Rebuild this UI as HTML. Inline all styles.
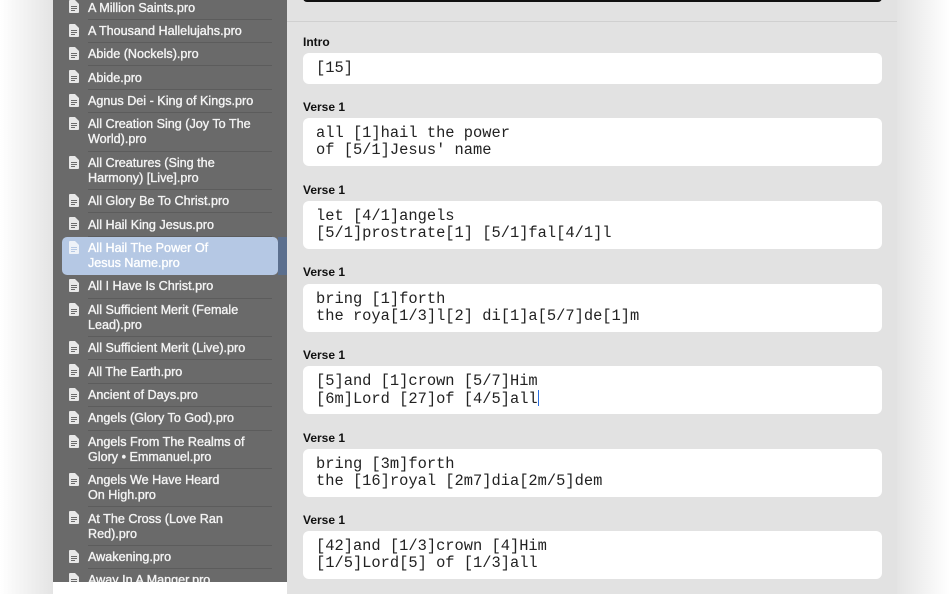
<!DOCTYPE html>
<html><head><meta charset="utf-8"><style>
*{margin:0;padding:0;box-sizing:border-box}
body{width:950px;height:594px;overflow:hidden;background:#fff;position:relative;font-family:"Liberation Sans",sans-serif}
.shadowL{position:absolute;left:0;top:0;width:53px;height:594px;background:linear-gradient(to right,#fff,#e4e4e4)}
.shadowR{position:absolute;left:897px;top:0;width:53px;height:594px;background:linear-gradient(to left,#fff,#e4e4e4)}
.side{position:absolute;left:53px;top:0;width:234px;height:582px;background:#6a6a6a;overflow:hidden}
.sideb{position:absolute;left:53px;top:582px;width:234px;height:12px;background:#fff}
.list{position:absolute;left:0;top:-3.7px;width:234px}
.row{position:relative;height:23.4px;padding:4.2px 0 0 35px;color:#f4f4f4;font-size:12.6px;line-height:15px;-webkit-text-stroke:0.35px #f4f4f4}
.row.d{height:38.4px}
.row::after{content:"";position:absolute;left:35px;right:15px;bottom:0;height:1px;background:#5c5c5c}
.row svg{position:absolute;left:16px;top:4px}
.row.sel{color:#fff;-webkit-text-stroke:0.35px #fff}
.row.sel::before{content:"";position:absolute;left:9px;top:0;width:216px;height:38px;background:#b5c8e4;border-radius:5px}
.row.sel .bar{position:absolute;left:225px;top:0;width:9px;height:38px;background:#5b6f8e}
.row.sel::after{display:none}
.row span{position:relative}
.main{position:absolute;left:287px;top:0;width:610px;height:594px;background:#e2e2e2}
.top{position:absolute;left:16px;top:-8px;width:579px;height:10px;background:#111;border-radius:4px}
.hr{position:absolute;left:0;top:21px;width:610px;height:1px;background:#d0d0d0}
.lbl{position:absolute;left:16px;font-size:12px;font-weight:bold;color:#111}
.box{position:absolute;left:16px;width:579px;background:#fff;border-radius:6px;font-family:"Liberation Mono",monospace;font-size:15.4px;line-height:17px;color:#222;padding:7px 0 0 13px;white-space:pre}
.cur{display:inline-block;width:1.5px;height:16px;background:#2a6fe0;vertical-align:-3px}
</style></head><body>
<div class="shadowL"></div><div class="shadowR"></div>
<div class="side"><div class="list">
<div class="row"><svg width="10" height="13" viewBox="0 0 10 13"><path d="M0 1Q0 0 1 0H6L10 4V12Q10 13 9 13H1Q0 13 0 12Z" fill="#e8e8e8"/><path d="M2 6.5H8M2 8.5H8M2 10.5H6" stroke="#6a6a6a" stroke-width="1"/></svg><span>A Million Saints.pro</span></div>
<div class="row"><svg width="10" height="13" viewBox="0 0 10 13"><path d="M0 1Q0 0 1 0H6L10 4V12Q10 13 9 13H1Q0 13 0 12Z" fill="#e8e8e8"/><path d="M2 6.5H8M2 8.5H8M2 10.5H6" stroke="#6a6a6a"/></svg><span>A Thousand Hallelujahs.pro</span></div>
<div class="row"><svg width="10" height="13" viewBox="0 0 10 13"><path d="M0 1Q0 0 1 0H6L10 4V12Q10 13 9 13H1Q0 13 0 12Z" fill="#e8e8e8"/><path d="M2 6.5H8M2 8.5H8M2 10.5H6" stroke="#6a6a6a"/></svg><span>Abide (Nockels).pro</span></div>
<div class="row"><svg width="10" height="13" viewBox="0 0 10 13"><path d="M0 1Q0 0 1 0H6L10 4V12Q10 13 9 13H1Q0 13 0 12Z" fill="#e8e8e8"/><path d="M2 6.5H8M2 8.5H8M2 10.5H6" stroke="#6a6a6a"/></svg><span>Abide.pro</span></div>
<div class="row"><svg width="10" height="13" viewBox="0 0 10 13"><path d="M0 1Q0 0 1 0H6L10 4V12Q10 13 9 13H1Q0 13 0 12Z" fill="#e8e8e8"/><path d="M2 6.5H8M2 8.5H8M2 10.5H6" stroke="#6a6a6a"/></svg><span>Agnus Dei - King of Kings.pro</span></div>
<div class="row d"><svg width="10" height="13" viewBox="0 0 10 13"><path d="M0 1Q0 0 1 0H6L10 4V12Q10 13 9 13H1Q0 13 0 12Z" fill="#e8e8e8"/><path d="M2 6.5H8M2 8.5H8M2 10.5H6" stroke="#6a6a6a"/></svg><span>All Creation Sing (Joy To The<br>World).pro</span></div>
<div class="row d"><svg width="10" height="13" viewBox="0 0 10 13"><path d="M0 1Q0 0 1 0H6L10 4V12Q10 13 9 13H1Q0 13 0 12Z" fill="#e8e8e8"/><path d="M2 6.5H8M2 8.5H8M2 10.5H6" stroke="#6a6a6a"/></svg><span>All Creatures (Sing the<br>Harmony) [Live].pro</span></div>
<div class="row"><svg width="10" height="13" viewBox="0 0 10 13"><path d="M0 1Q0 0 1 0H6L10 4V12Q10 13 9 13H1Q0 13 0 12Z" fill="#e8e8e8"/><path d="M2 6.5H8M2 8.5H8M2 10.5H6" stroke="#6a6a6a"/></svg><span>All Glory Be To Christ.pro</span></div>
<div class="row"><svg width="10" height="13" viewBox="0 0 10 13"><path d="M0 1Q0 0 1 0H6L10 4V12Q10 13 9 13H1Q0 13 0 12Z" fill="#e8e8e8"/><path d="M2 6.5H8M2 8.5H8M2 10.5H6" stroke="#6a6a6a"/></svg><span>All Hail King Jesus.pro</span></div>
<div class="row d sel"><div class="bar"></div><svg width="10" height="13" viewBox="0 0 10 13" style="position:absolute"><path d="M0 1Q0 0 1 0H6L10 4V12Q10 13 9 13H1Q0 13 0 12Z" fill="#eef2f8"/><path d="M2 6.5H8M2 8.5H8M2 10.5H6" stroke="#b5c8e4"/></svg><span>All Hail The Power Of<br>Jesus Name.pro</span></div>
<div class="row"><svg width="10" height="13" viewBox="0 0 10 13"><path d="M0 1Q0 0 1 0H6L10 4V12Q10 13 9 13H1Q0 13 0 12Z" fill="#e8e8e8"/><path d="M2 6.5H8M2 8.5H8M2 10.5H6" stroke="#6a6a6a"/></svg><span>All I Have Is Christ.pro</span></div>
<div class="row d"><svg width="10" height="13" viewBox="0 0 10 13"><path d="M0 1Q0 0 1 0H6L10 4V12Q10 13 9 13H1Q0 13 0 12Z" fill="#e8e8e8"/><path d="M2 6.5H8M2 8.5H8M2 10.5H6" stroke="#6a6a6a"/></svg><span>All Sufficient Merit (Female<br>Lead).pro</span></div>
<div class="row"><svg width="10" height="13" viewBox="0 0 10 13"><path d="M0 1Q0 0 1 0H6L10 4V12Q10 13 9 13H1Q0 13 0 12Z" fill="#e8e8e8"/><path d="M2 6.5H8M2 8.5H8M2 10.5H6" stroke="#6a6a6a"/></svg><span>All Sufficient Merit (Live).pro</span></div>
<div class="row"><svg width="10" height="13" viewBox="0 0 10 13"><path d="M0 1Q0 0 1 0H6L10 4V12Q10 13 9 13H1Q0 13 0 12Z" fill="#e8e8e8"/><path d="M2 6.5H8M2 8.5H8M2 10.5H6" stroke="#6a6a6a"/></svg><span>All The Earth.pro</span></div>
<div class="row"><svg width="10" height="13" viewBox="0 0 10 13"><path d="M0 1Q0 0 1 0H6L10 4V12Q10 13 9 13H1Q0 13 0 12Z" fill="#e8e8e8"/><path d="M2 6.5H8M2 8.5H8M2 10.5H6" stroke="#6a6a6a"/></svg><span>Ancient of Days.pro</span></div>
<div class="row"><svg width="10" height="13" viewBox="0 0 10 13"><path d="M0 1Q0 0 1 0H6L10 4V12Q10 13 9 13H1Q0 13 0 12Z" fill="#e8e8e8"/><path d="M2 6.5H8M2 8.5H8M2 10.5H6" stroke="#6a6a6a"/></svg><span>Angels (Glory To God).pro</span></div>
<div class="row d"><svg width="10" height="13" viewBox="0 0 10 13"><path d="M0 1Q0 0 1 0H6L10 4V12Q10 13 9 13H1Q0 13 0 12Z" fill="#e8e8e8"/><path d="M2 6.5H8M2 8.5H8M2 10.5H6" stroke="#6a6a6a"/></svg><span>Angels From The Realms of<br>Glory • Emmanuel.pro</span></div>
<div class="row d"><svg width="10" height="13" viewBox="0 0 10 13"><path d="M0 1Q0 0 1 0H6L10 4V12Q10 13 9 13H1Q0 13 0 12Z" fill="#e8e8e8"/><path d="M2 6.5H8M2 8.5H8M2 10.5H6" stroke="#6a6a6a"/></svg><span>Angels We Have Heard<br>On High.pro</span></div>
<div class="row d"><svg width="10" height="13" viewBox="0 0 10 13"><path d="M0 1Q0 0 1 0H6L10 4V12Q10 13 9 13H1Q0 13 0 12Z" fill="#e8e8e8"/><path d="M2 6.5H8M2 8.5H8M2 10.5H6" stroke="#6a6a6a"/></svg><span>At The Cross (Love Ran<br>Red).pro</span></div>
<div class="row"><svg width="10" height="13" viewBox="0 0 10 13"><path d="M0 1Q0 0 1 0H6L10 4V12Q10 13 9 13H1Q0 13 0 12Z" fill="#e8e8e8"/><path d="M2 6.5H8M2 8.5H8M2 10.5H6" stroke="#6a6a6a"/></svg><span>Awakening.pro</span></div>
<div class="row"><svg width="10" height="13" viewBox="0 0 10 13"><path d="M0 1Q0 0 1 0H6L10 4V12Q10 13 9 13H1Q0 13 0 12Z" fill="#e8e8e8"/><path d="M2 6.5H8M2 8.5H8M2 10.5H6" stroke="#6a6a6a"/></svg><span>Away In A Manger.pro</span></div>
</div></div>
<div class="sideb"></div>
<div class="main">
<div class="top"></div><div class="hr"></div>
<div class="lbl" style="top:35px">Intro</div>
<div class="box" style="top:53px;height:31px">[15]</div>
<div class="lbl" style="top:100px">Verse 1</div>
<div class="box" style="top:118px;height:48px">all [1]hail the power
of [5/1]Jesus' name</div>
<div class="lbl" style="top:183px">Verse 1</div>
<div class="box" style="top:201px;height:48px">let [4/1]angels
[5/1]prostrate[1] [5/1]fal[4/1]l</div>
<div class="lbl" style="top:265px">Verse 1</div>
<div class="box" style="top:284px;height:48px">bring [1]forth
the roya[1/3]l[2] di[1]a[5/7]de[1]m</div>
<div class="lbl" style="top:348px">Verse 1</div>
<div class="box" style="top:366px;height:48px">[5]and [1]crown [5/7]Him
[6m]Lord [27]of [4/5]all<span class="cur"></span></div>
<div class="lbl" style="top:431px">Verse 1</div>
<div class="box" style="top:449px;height:48px">bring [3m]forth
the [16]royal [2m7]dia[2m/5]dem</div>
<div class="lbl" style="top:513px">Verse 1</div>
<div class="box" style="top:531px;height:48px">[42]and [1/3]crown [4]Him
[1/5]Lord[5] of [1/3]all</div>
</div>
</body></html>
